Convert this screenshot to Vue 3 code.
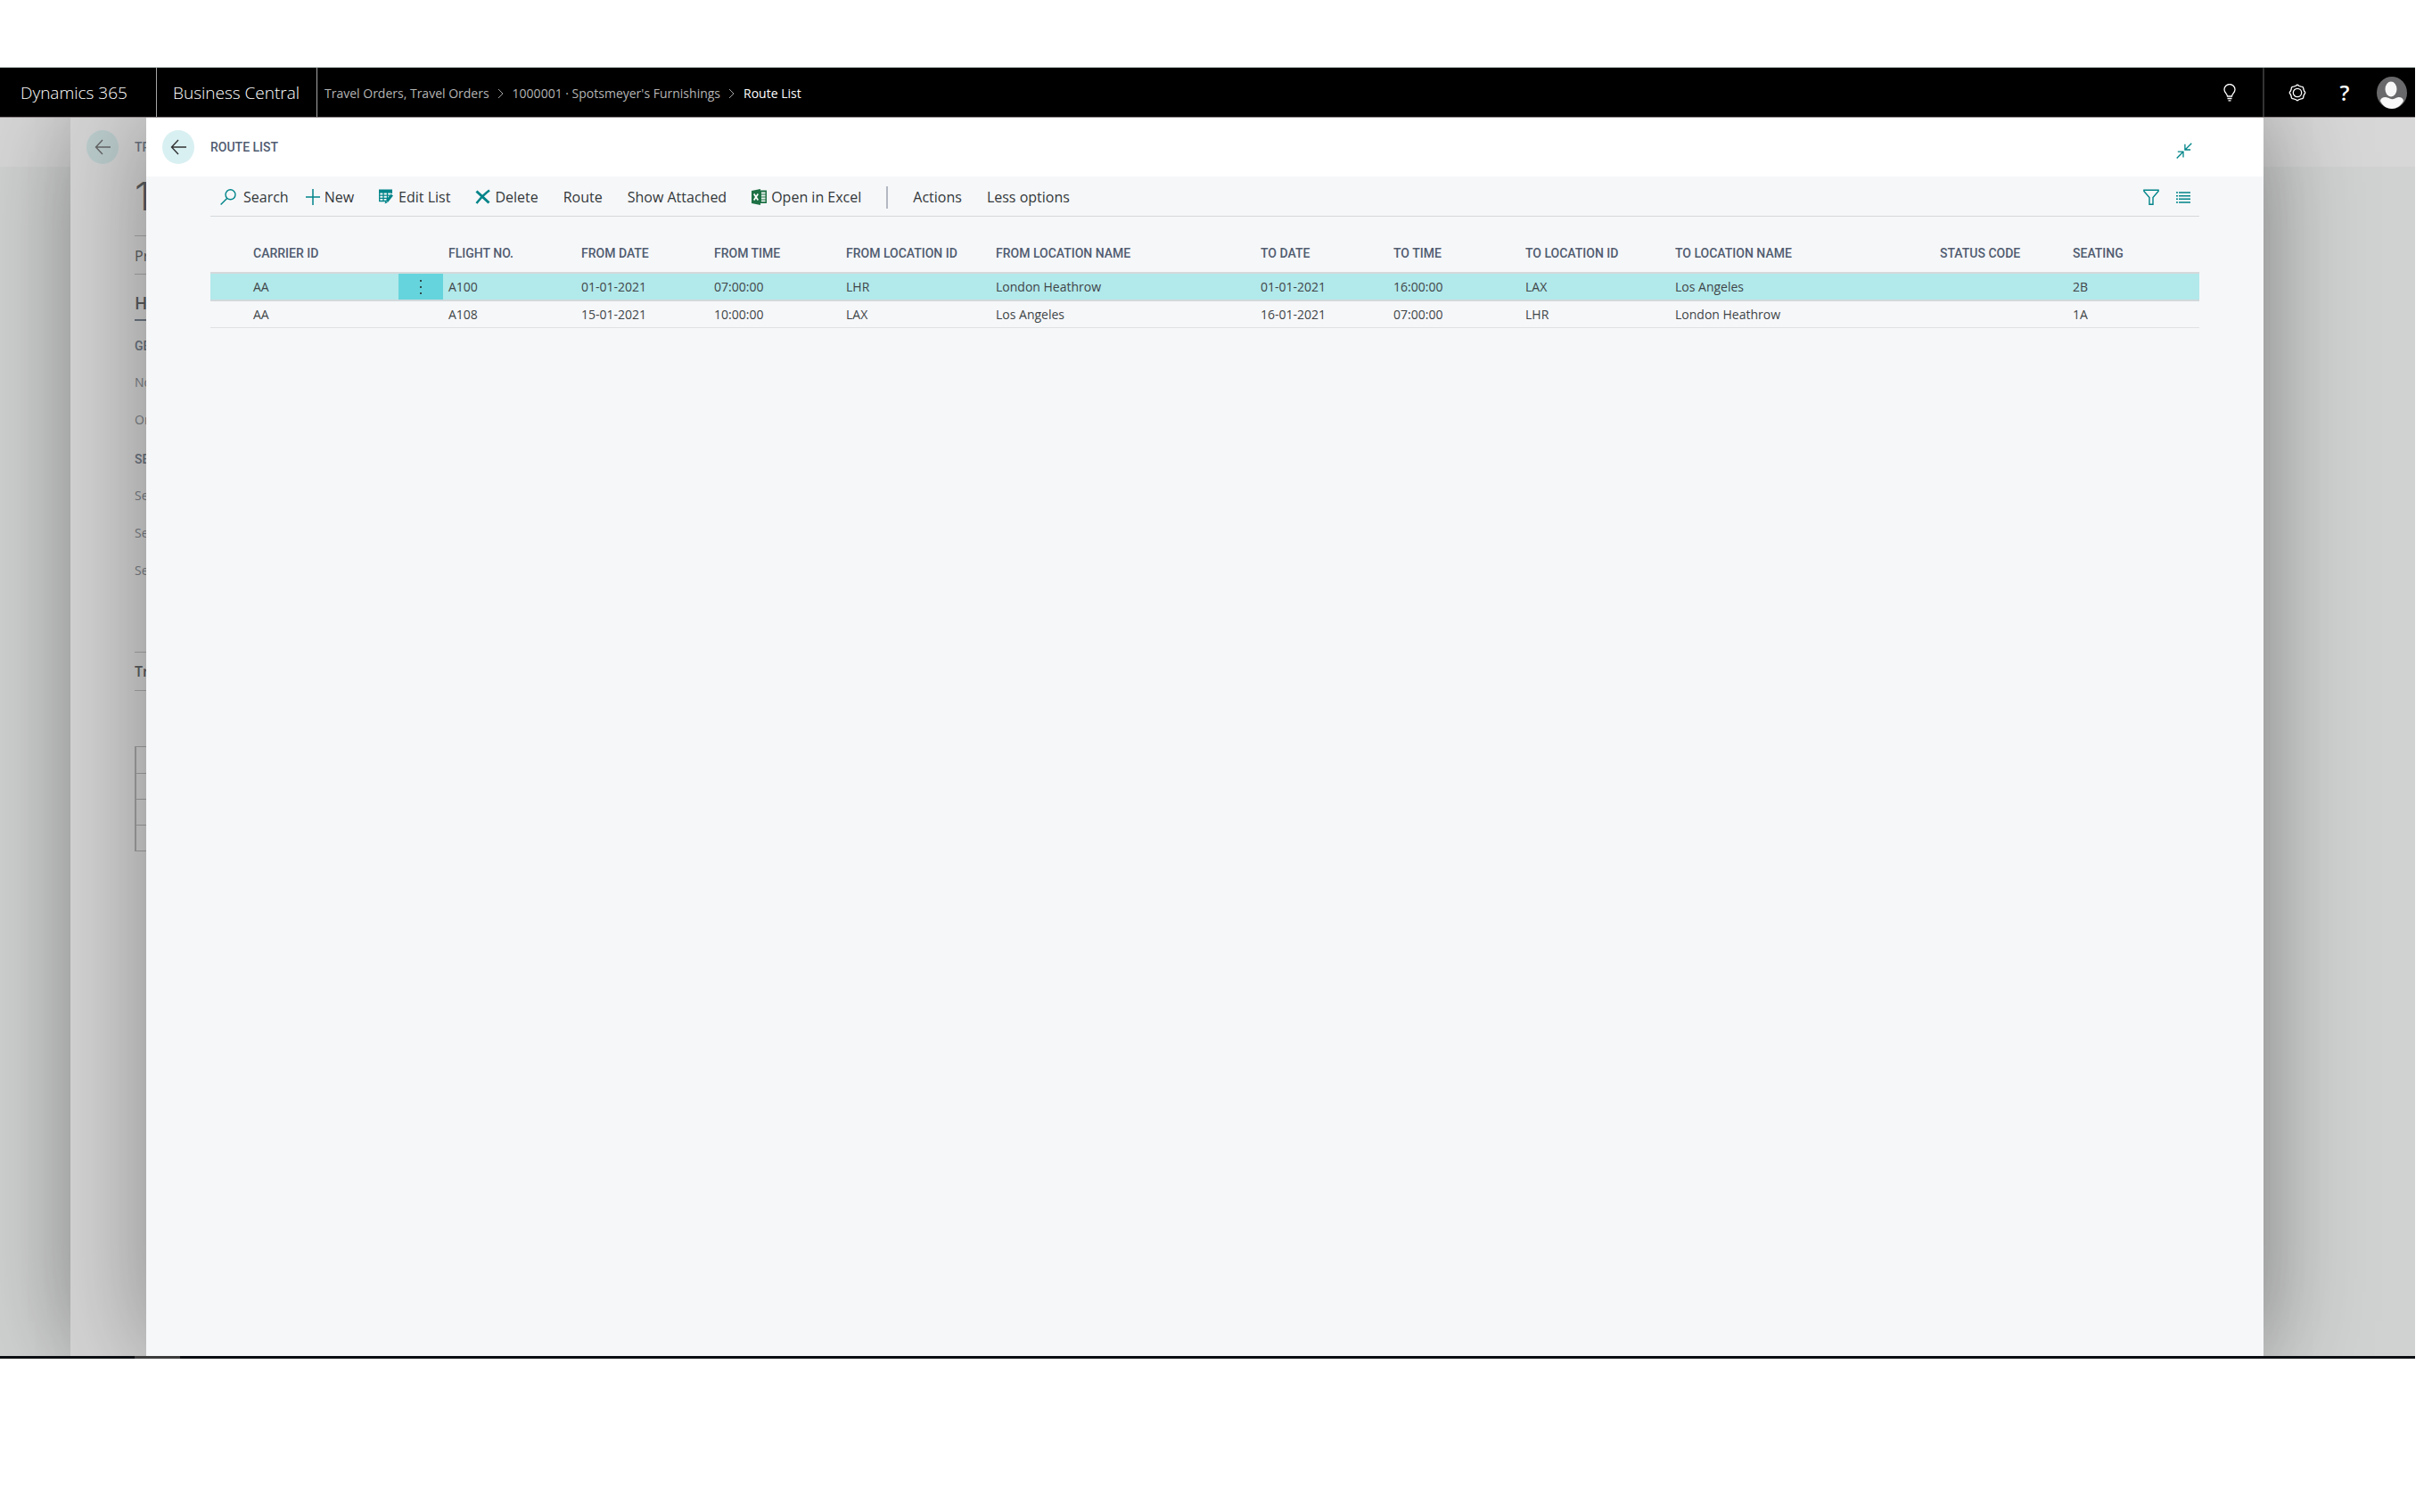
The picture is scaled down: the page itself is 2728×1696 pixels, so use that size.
<script setup>
const crumbs = ['Travel Orders, Travel Orders', "1000001 · Spotsmeyer's Furnishings"]

const columns = [
  { key: 'selector', weight: 42 },
  { key: 'carrier', label: 'CARRIER ID', weight: 169 },
  { key: 'menu', weight: 50 },
  { key: 'flight', label: 'FLIGHT NO.', weight: 149 },
  { key: 'fromDate', label: 'FROM DATE', weight: 149 },
  { key: 'fromTime', label: 'FROM TIME', weight: 148 },
  { key: 'fromId', label: 'FROM LOCATION ID', weight: 168 },
  { key: 'fromName', label: 'FROM LOCATION NAME', weight: 297 },
  { key: 'toDate', label: 'TO DATE', weight: 149 },
  { key: 'toTime', label: 'TO TIME', weight: 148 },
  { key: 'toId', label: 'TO LOCATION ID', weight: 168 },
  { key: 'toName', label: 'TO LOCATION NAME', weight: 297 },
  { key: 'status', label: 'STATUS CODE', weight: 149 },
  { key: 'seating', label: 'SEATING', weight: 148 }
]
const totalWeight = columns.reduce((sum, c) => sum + c.weight, 0)

const routes = [
  {
    carrier: 'AA', flight: 'A100', fromDate: '01-01-2021', fromTime: '07:00:00', fromId: 'LHR', fromName: 'London Heathrow',
    toDate: '01-01-2021', toTime: '16:00:00', toId: 'LAX', toName: 'Los Angeles', status: '', seating: '2B', selected: true
  },
  {
    carrier: 'AA', flight: 'A108', fromDate: '15-01-2021', fromTime: '10:00:00', fromId: 'LAX', fromName: 'Los Angeles',
    toDate: '16-01-2021', toTime: '07:00:00', toId: 'LHR', toName: 'London Heathrow', status: '', seating: '1A', selected: false
  }
]
</script>

<template>
  <div class="page">
    <header class="topbar">
      <a class="brand" href="#">Dynamics 365</a>
      <a class="brand product" href="#">Business Central</a>
      <nav class="crumbs" aria-label="Breadcrumb">
        <template v-for="crumb in crumbs" :key="crumb">
          <a href="#">{{ crumb }}</a>
          <svg class="chevron" width="8" height="12" viewBox="0 0 8 12"><path d="M1 1l5 5-5 5" /></svg>
        </template>
        <span class="current">Route List</span>
      </nav>
      <button class="top-btn tell" aria-label="Tell me">
        <svg width="14" height="20" viewBox="0 0 14 20" fill="none" stroke="#fff">
          <path d="M4.5 14c0-3-3.500-4-3.500-7.500a6 6 0 0 1 12 0c0 3.500-3.500 4.500-3.500 7.500z" stroke-width="1.300" />
          <path d="M4.500 16.500h5M5.500 18.800h3" stroke-width="1.300" />
        </svg>
      </button>
      <button class="top-btn" aria-label="Settings">
        <svg width="20" height="20" viewBox="0 0 20 20" fill="none" stroke="#fff" stroke-width="1.300">
          <circle cx="10" cy="10" r="4.700" />
          <path d="M8.300 2.300Q10 .2 11.700 2.300L14.200 3.200Q16.900 3.100 16.800 5.800L17.700 8.300Q19.800 10 17.700 11.700L16.800 14.200Q16.900 16.900 14.200 16.800L11.700 17.700Q10 19.800 8.300 17.700L5.800 16.800Q3.100 16.900 3.200 14.200L2.300 11.700Q.2 10 2.300 8.300L3.200 5.800Q3.100 3.100 5.800 3.200z" />
        </svg>
      </button>
      <button class="help" aria-label="Help">?</button>
      <button class="avatar" aria-label="Account">
        <svg width="34" height="36" viewBox="0 0 34 36">
          <ellipse cx="17" cy="18" rx="17" ry="18" fill="#69696b" />
          <path d="M4 27c.5-3 3.500-4.300 7-3.800 3 .6 4.500 2 6.500 2s3.500-1.400 6-2c3.500-.5 6 .8 6.500 3.800-2 4.500-7 9-13 9s-11-4-13-9z" fill="#f8f8f8" />
          <ellipse cx="16" cy="14" rx="6.500" ry="8.500" fill="#f8f8f8" />
        </svg>
      </button>
    </header>

    <div class="stage">
      <div class="base"><div class="base-head"></div></div>

      <section class="sheet">
        <div class="sheet-head">
          <span class="back dim">
            <svg width="18" height="18" viewBox="0 0 18 18"><path d="M18 9H1.500M9 1L1.500 9 9 17" /></svg>
          </span>
          <span class="title">TRAVEL</span>
        </div>
        <div class="sheet-body">
          <div class="record">10</div>
          <div class="process">Process</div>
          <div class="fast-tab"><span>Header</span></div>
          <div class="group first">GENERAL</div>
          <div class="field">No.</div>
          <div class="field">Order Date</div>
          <div class="group">SELL-TO</div>
          <div class="field">Sell-to No.</div>
          <div class="field">Sell-to Name</div>
          <div class="field">Sell-to City</div>
          <div class="lines-tab">Travel Lines</div>
          <div class="lines"><i></i><i></i><i></i><i></i></div>
        </div>
      </section>

      <main class="modal">
        <div class="modal-head">
          <button class="back" aria-label="Back">
            <svg width="18" height="18" viewBox="0 0 18 18"><path d="M18 9H1.500M9 1L1.500 9 9 17" /></svg>
          </button>
          <h1 class="title">ROUTE LIST</h1>
          <button class="icon-btn collapse" aria-label="Collapse">
            <svg width="18" height="18" viewBox="0 0 18 18" fill="none" stroke="#008489" stroke-width="1.300">
              <path d="M17.300.7L10 8M9.900 1.800V8h6.200M.7 17.500L7.800 10.200M1.800 10.200H8v6.200" />
            </svg>
          </button>
        </div>

        <div class="content">
          <div class="toolbar">
            <button class="action search">
              <svg width="18" height="18" viewBox="0 0 18 18" fill="none" stroke="#008489" stroke-width="1.400">
                <circle cx="11.500" cy="6.300" r="5.500" /><path d="M7.600 10.400L.6 17.500" />
              </svg>
              Search
            </button>
            <button class="action">
              <svg width="16" height="18" viewBox="0 0 16 18" fill="none" stroke="#008489" stroke-width="1.500"><path d="M8 0v18M0 9h16" /></svg>
              New
            </button>
            <button class="action">
              <svg width="17" height="18" viewBox="0 0 17 18" fill="none" stroke="#008489">
                <path d="M0 2.500h15" stroke-width="4" />
                <path d="M.7 1v12.500H8M5 4v9.500M9.500 4v8M14.200 1v4M.7 7.200H12M.7 10.300H9" stroke-width="1.300" />
                <path d="M14.700 6.500L9 13.800" stroke-width="3.200" />
                <path d="M7.700 13L6.500 16.500 10 15z" fill="#008489" stroke="none" />
              </svg>
              Edit List
            </button>
            <button class="action">
              <svg width="17" height="18" viewBox="0 0 17 18" fill="none" stroke="#008489">
                <path d="M1.500 2.500L15.500 15.500" stroke-width="3" /><path d="M16 1.500Q9 6.500 1.500 16" stroke-width="2.500" />
              </svg>
              Delete
            </button>
            <button class="action">Route</button>
            <button class="action">Show Attached</button>
            <button class="action">
              <svg width="17" height="18" viewBox="0 0 17 18">
                <path d="M9 1.500h8v14.500H9z" fill="#1e7145" />
                <path d="M11 3.500h4.500v2H11zM11 6.500h4.500v2H11zM11 9.500h4.500v2H11zM11 12.500h4.500v1.700H11z" fill="#e9f3ee" />
                <path d="M0 2L10 0v18L0 16z" fill="#1e7145" />
                <path d="M2.700 5.500L7.300 12.500M7.300 5.500L2.700 12.500" stroke="#fff" stroke-width="1.700" />
              </svg>
              Open in Excel
            </button>
            <span class="separator"></span>
            <button class="action">Actions</button>
            <button class="action">Less options</button>
            <div class="view-tools">
              <button class="icon-btn" aria-label="Filter">
                <svg width="18" height="18" viewBox="0 0 18 18" fill="none" stroke="#008489" stroke-width="1.400">
                  <path d="M.9 1.200h16.200v1.300L11 9.500v7.700H7V9.500L.9 2.500z" />
                </svg>
              </button>
              <button class="icon-btn" aria-label="List view">
                <svg width="16" height="18" viewBox="0 0 16 18" stroke="#008489" stroke-width="1.400">
                  <path d="M0 4h2M3 4h13M0 7.700h2M3 7.700h13M0 11.300h2M3 11.300h13M0 15h2M3 15h13" />
                </svg>
              </button>
            </div>
          </div>

          <table class="grid">
            <colgroup>
              <col v-for="c in columns" :key="c.key" :style="{ width: (c.weight / totalWeight) * 100 + '%' }">
            </colgroup>
            <thead>
              <tr><th v-for="c in columns" :key="c.key" scope="col">{{ c.label }}</th></tr>
            </thead>
            <tbody>
              <tr v-for="r in routes" :key="r.flight" :class="{ selected: r.selected }">
                <td v-for="c in columns" :key="c.key" :class="{ menu: c.key === 'menu' }">
                  <button v-if="c.key === 'menu' && r.selected" class="kebab" aria-label="Row actions">
                    <svg width="3" height="16" viewBox="0 0 3 16" fill="#2f4a4d"><path d="M0 0h2v2H0zM0 7h2v2H0zM0 14h2v2H0z" /></svg>
                  </button>
                  <template v-else>{{ r[c.key] }}</template>
                </td>
              </tr>
            </tbody>
          </table>
        </div>
      </main>
    </div>

    <div class="footer-bar"><span></span></div>
  </div>
</template>

<style>
html,
body {
  margin: 0;
  background: #fff;
}
</style>

<style scoped>
* {
  box-sizing: border-box;
}

.page {
  display: flex;
  flex-direction: column;
  min-height: 100vh;
  padding: 75px 19px 172px 0;
  font: 14px/20px "Open Sans", "Noto Sans", sans-serif;
  color: #404548;
}

button {
  margin: 0;
  padding: 0;
  border: 0;
  background: none;
  font: inherit;
  color: inherit;
  display: flex;
  align-items: center;
  justify-content: center;
}

a {
  color: inherit;
  text-decoration: none;
}

svg {
  display: block;
  flex: none;
}

.topbar {
  display: flex;
  align-items: center;
  height: 57px;
  background: #000;
  border-top: 1px solid #bcc6c0;
  border-bottom: 1px solid #8c8384;
  color: #fff;
}

.brand {
  display: flex;
  align-items: center;
  align-self: stretch;
  padding: 0 28px 0 23px;
  width: 176px;
  border-right: 1px solid #a5a5a5;
  font-size: 19px;
  font-weight: 300;
  white-space: nowrap;
}

.product {
  width: 180px;
  padding: 0 18px;
}

.crumbs {
  display: flex;
  align-items: center;
  gap: 9px;
  flex: 1;
  padding: 2px 0 0 8px;
  color: #b4b4b4;
  white-space: nowrap;
}

.chevron {
  fill: none;
  stroke: #a0a0a0;
}

.current {
  color: #fff;
}

.top-btn {
  align-self: stretch;
  width: 74px;
}

.tell {
  width: 76px;
  border-right: 2px solid #333;
}

.help {
  width: 32px;
  font-size: 24px;
  font-weight: 600;
}

.avatar {
  margin: 0 9px 0 20px;
}

.stage {
  display: grid;
  flex: 1;
  overflow: hidden;
}

.stage > * {
  grid-area: 1 / 1;
}

.base {
  z-index: 0;
  background: #d0d1d1;
}

.base-head {
  height: 55px;
  background: #d7d7d7;
}

.sheet {
  z-index: 1;
  margin: 0 240px 0 79px;
  background: #d4d4d4;
  box-shadow: 0 0 110px rgba(0, 0, 0, 0.34);
  color: #5b5d5f;
}

.modal {
  z-index: 2;
  margin: 0 170px 0 164px;
  background: #f6f7f9;
  box-shadow: 0 0 110px rgba(0, 0, 0, 0.36);
}

.sheet-head,
.modal-head {
  display: flex;
  align-items: center;
  gap: 18px;
  height: 66px;
  padding: 0 80px 0 18px;
}

.modal-head {
  background: #fff;
}

.back {
  display: flex;
  align-items: center;
  justify-content: center;
  width: 36px;
  height: 38px;
  border-radius: 50%;
  background: #d9f0f2;
}

.back svg {
  fill: none;
  stroke: #333;
  stroke-width: 1.4;
}

.dim {
  background: #bccdce;
}

.dim svg {
  stroke: #666;
}

.title {
  margin: 0;
  font: 500 14px/20px Roboto, sans-serif;
  color: #505c70;
}

.sheet .title,
.group {
  color: #6b7380;
}

.collapse {
  margin: 8px 0 0 auto;
}

.sheet-body {
  padding-left: 72px;
}

.record {
  height: 66px;
  font: 300 44px/44px Inter, sans-serif;
}

.process {
  height: 44px;
  border: solid #a9a9a9;
  border-width: 1px 0;
  font-size: 16px;
  line-height: 44px;
}

.fast-tab {
  height: 52px;
  padding-top: 19px;
  border-bottom: 2px solid #707884;
  font-size: 19px;
  font-weight: 600;
  line-height: 26px;
}

.group {
  margin: 13px 0 10px;
  font: 500 14px/20px Roboto, sans-serif;
}

.group.first {
  margin-top: 18px;
}

.field {
  line-height: 42px;
  color: #7b7f85;
}

.lines-tab {
  height: 44px;
  margin-top: 70px;
  border: solid #a9a9a9;
  border-width: 1px 0;
  font-size: 16px;
  font-weight: 600;
  line-height: 42px;
}

.lines {
  margin-top: 62px;
  border: 1px solid #a3a3a3;
  border-width: 1px 0 1px 2px;
}

.lines i {
  display: block;
  height: 29px;
}

.lines i + i {
  border-top: 1px solid #a3a3a3;
}

.content {
  padding: 0 72px;
}

.toolbar {
  display: flex;
  align-items: center;
  gap: 28px;
  height: 45px;
  padding: 2px 10px 0 11px;
  border-bottom: 1px solid #d5d8da;
}

.action {
  gap: 5px;
  font-size: 16px;
  line-height: 42px;
  color: #33373a;
  white-space: nowrap;
}

.search {
  gap: 8px;
  margin-right: -9px;
}

.separator {
  width: 2px;
  height: 25px;
  background: #b3b8c2;
}

.view-tools {
  display: flex;
  gap: 19px;
  margin-left: auto;
}

.grid {
  width: 100%;
  table-layout: fixed;
  border-collapse: separate;
  border-spacing: 0;
  text-align: left;
}

.grid th {
  height: 64px;
  padding: 0 0 11px 6px;
  vertical-align: bottom;
  border-bottom: 2px solid #d5d9db;
  font: 500 14px/20px Roboto, sans-serif;
  color: #505c70;
  white-space: nowrap;
}

.grid td {
  height: 30px;
  padding: 0 0 0 6px;
  line-height: 29px;
  border-bottom: 1px solid #dfe1e3;
  white-space: nowrap;
}

.grid .selected td {
  height: 31px;
  background: #b2e9eb;
  border-bottom: 2px solid #d2d9dc;
}

.grid td.menu {
  padding: 0;
}

.kebab {
  width: 100%;
  height: 29px;
  background: #66d4dc;
}

.footer-bar {
  height: 3px;
  padding-left: 151px;
  background: #0b0e12;
}

.footer-bar span {
  display: block;
  width: 51px;
  height: 3px;
  background: #3c3c3d;
}
</style>
